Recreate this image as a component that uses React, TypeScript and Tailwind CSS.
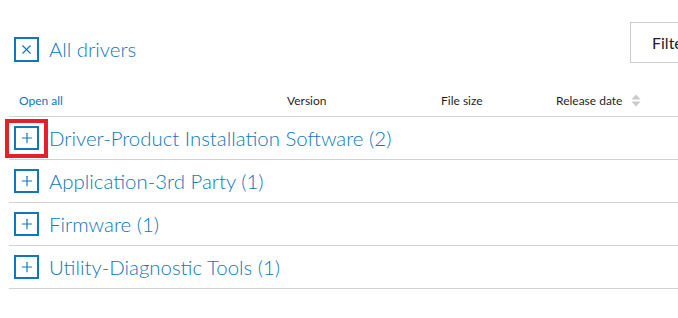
import { X, Plus } from 'lucide-react';

const CATEGORIES = [
  'Driver-Product Installation Software (2)',
  'Application-3rd Party (1)',
  'Firmware (1)',
  'Utility-Diagnostic Tools (1)',
];

function SortIcon() {
  return (
    <svg width="10" height="13" viewBox="0 0 10 13" className="ml-[9px]">
      <path d="M5 0.5 L9.5 5.5 H0.5 Z" fill="#c9c9c9" />
      <path d="M5 12.5 L9.5 7.5 H0.5 Z" fill="#c9c9c9" />
    </svg>
  );
}

export default function App() {
  return (
    <div className="relative w-[678px] h-[318px] overflow-hidden bg-white font-['Lato','Open_Sans',sans-serif]">
      {/* Top bar */}
      <div className="flex justify-between pt-[22px]">
        <button className="flex items-center mt-[13px] ml-[14px] text-[#0e78bd]">
          <span className="flex items-center justify-center w-[25px] h-[25px] border-2 border-[#0e78bd]">
            <X size={15} strokeWidth={1.75} />
          </span>
          <span className="ml-[10px] text-[20.4px] leading-none font-light">All drivers</span>
        </button>
        <div className="flex items-center w-[100px] h-[41px] mr-[-52px] pl-[21px] border border-[#cccccc] text-[16px] text-[#222]">
          Filter
        </div>
      </div>

      {/* Column header */}
      <div className="flex items-center h-[31px] mt-[22px] text-[12px] text-[#1f1f1f]">
        <span className="w-[287px] pl-[19px] text-[#0e78bd]">Open all</span>
        <span className="w-[154px]">Version</span>
        <span className="w-[115px]">File size</span>
        <span className="flex items-center">Release date<SortIcon /></span>
      </div>

      {/* Category rows */}
      <div className="ml-[9px] border-t border-[#d2d2d2]">
        {CATEGORIES.map((c) => (
          <div key={c} className="flex items-center h-[43px] pl-[5px] border-b border-[#d2d2d2] text-[#0e78bd]">
            <span className="flex items-center justify-center w-[25px] h-[24px] border-2 border-[#0e78bd]">
              <Plus size={16} strokeWidth={1.75} />
            </span>
            <span className="ml-[10px] text-[20.4px] leading-none font-light">{c}</span>
          </div>
        ))}
      </div>

      {/* Annotation */}
      <div className="absolute left-[5px] top-[119px] w-[43px] h-[39px] border-4 border-[#e5202b]" />
    </div>
  );
}
